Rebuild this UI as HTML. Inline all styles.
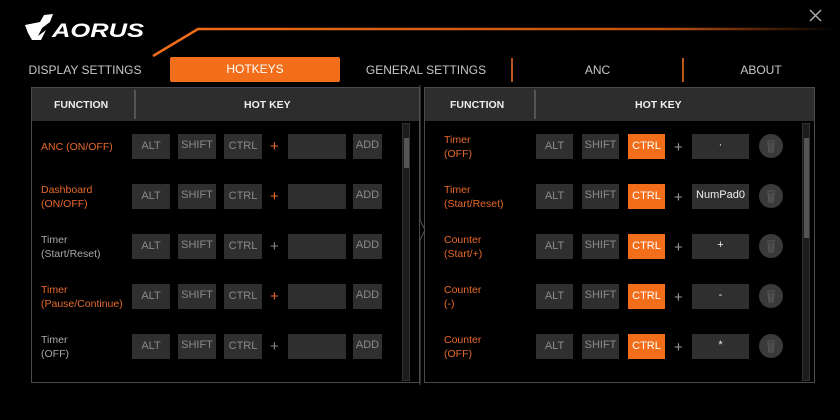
<!DOCTYPE html>
<html><head><meta charset="utf-8"><style>
*{margin:0;padding:0;box-sizing:border-box}
body{width:840px;height:420px;background:#000;overflow:hidden;position:relative;font-family:"Liberation Sans",sans-serif;color:#bbb}
.a{position:absolute}
.tab{position:absolute;top:63px;font-size:12px;color:#c8c8c8;text-align:center}
.panel{position:absolute;top:87px;height:296px;border:1px solid #4a4a4a}
.hdr{position:absolute;left:0;top:0;right:0;height:33px;background:#2d2d2d;font-size:10.5px;color:#eee;font-weight:bold}
.hdr span{position:absolute;top:11px}
.btn{position:absolute;height:25px;background:#2f2f2f;color:#8a8a8a;font-size:11px;text-align:center;line-height:25px}
.on{background:#f36e1a;color:#fff}
.lbl{position:absolute;font-size:10.5px;line-height:14px}
.or{color:#e8692a}.gr{color:#aaa}
.plus{position:absolute;font-size:15px}
.sb{position:absolute;width:8px;background:#1c1c1c;border:1px solid #333}
.sb i{position:absolute;left:1px;width:5px;background:#555}
.tr{position:absolute;width:24px;height:24px;border-radius:50%;background:#3a3a3a}
</style></head><body>
<svg class="a" style="left:0;top:0" width="840" height="90">
<defs><linearGradient id="g" x1="0" x2="1"><stop offset="0" stop-color="#f36e1a"/><stop offset="0.75" stop-color="#c0520f"/><stop offset="1" stop-color="#000"/></linearGradient></defs>
<path d="M153 56 L198 29 L835 29" fill="none" stroke="url(#g)" stroke-width="2.5"/>
<path d="M810 10 L821 21 M821 10 L810 21" stroke="#aaa" stroke-width="1.5"/>
<path d="M25 25 L40 22 L44 15 L53 14 L50 22 L42 28 L38 36 L46 30 L41 40 L32 40 L28 33 Z" fill="#fff"/>
<text x="52" y="37" font-family="Liberation Sans" font-weight="bold" font-style="italic" font-size="19" fill="#fff" textLength="92" lengthAdjust="spacingAndGlyphs">AORUS</text>
</svg>
<div class="tab" style="left:20px;width:130px">DISPLAY SETTINGS</div>
<div class="a" style="left:170px;top:57px;width:170px;height:25px;background:#f36e1a;border-radius:2px;color:#fff;font-size:12px;text-align:center;line-height:25px">HOTKEYS</div>
<div class="tab" style="left:356px;width:140px">GENERAL SETTINGS</div>
<div class="a" style="left:511px;top:58px;width:2px;height:24px;background:#b8561a"></div>
<div class="tab" style="left:560px;width:75px">ANC</div>
<div class="a" style="left:682px;top:58px;width:2px;height:24px;background:#b8561a"></div>
<div class="tab" style="left:725px;width:72px">ABOUT</div>

<div class="panel" style="left:31px;width:389px">
<div class="hdr"><span style="left:22px">FUNCTION</span><span style="left:212px">HOT KEY</span><div class="a" style="left:102px;top:2px;width:2px;height:29px;background:#555"></div></div>
<div class="sb" style="left:370px;top:35px;height:258px"><i style="top:14px;height:30px"></i></div>
</div>
<svg class="a" style="left:419px;top:85px" width="8" height="300"><path d="M1 0 L1 135 L6 145 L1 155 L1 300" fill="none" stroke="#555"/></svg>
<div class="panel" style="left:424px;width:391px">
<div class="hdr"><span style="left:25px">FUNCTION</span><span style="left:210px">HOT KEY</span><div class="a" style="left:109px;top:2px;width:2px;height:29px;background:#555"></div></div>
<div class="sb" style="left:377px;top:35px;height:258px"><i style="top:14px;height:100px"></i></div>
</div>

<div class="lbl or" style="left:41px;top:140px">ANC (ON/OFF)</div>
<div class="lbl or" style="left:41px;top:183px">Dashboard<br>(ON/OFF)</div>
<div class="lbl gr" style="left:41px;top:233px">Timer<br>(Start/Reset)</div>
<div class="lbl or" style="left:41px;top:283px">Timer<br>(Pause/Continue)</div>
<div class="lbl gr" style="left:41px;top:333px">Timer<br>(OFF)</div>

<div class="lbl or" style="left:444px;top:133px">Timer<br>(OFF)</div>
<div class="lbl or" style="left:444px;top:183px">Timer<br>(Start/Reset)</div>
<div class="lbl or" style="left:444px;top:233px">Counter<br>(Start/+)</div>
<div class="lbl or" style="left:444px;top:283px">Counter<br>(-)</div>
<div class="lbl or" style="left:444px;top:333px">Counter<br>(OFF)</div>

<div id="rows"></div>
<script>
var h='';var ys=[134,184,234,284,334];var lp=[1,1,0,1,0];var keys=['·','NumPad0','+','-','*'];
var trash='<svg width="24" height="24" style="position:absolute;left:0;top:0"><path d="M8 7 H16 M9 8 L10 18 H14 L15 8 M11 9 V17 M13 9 V17" stroke="#555" stroke-width="1.2" fill="none"/></svg>';
ys.forEach(function(y,i){
h+='<div class="btn" style="left:132px;top:'+y+'px;width:38px">ALT</div>';
h+='<div class="btn" style="left:178px;top:'+y+'px;width:38px;line-height:22px">SHIFT</div>';
h+='<div class="btn" style="left:224px;top:'+y+'px;width:38px">CTRL</div>';
h+='<div class="plus" style="left:270px;top:'+(y+4)+'px;color:'+(lp[i]?'#e8692a':'#888')+'">+</div>';
h+='<div class="btn" style="left:288px;top:'+y+'px;width:58px"></div>';
h+='<div class="btn" style="left:353px;top:'+y+'px;width:29px;line-height:22px">ADD</div>';
h+='<div class="btn" style="left:536px;top:'+y+'px;width:37px">ALT</div>';
h+='<div class="btn" style="left:582px;top:'+y+'px;width:37px;line-height:22px">SHIFT</div>';
h+='<div class="btn on" style="left:628px;top:'+y+'px;width:37px">CTRL</div>';
h+='<div class="plus" style="left:674px;top:'+(y+5)+'px;color:#999">+</div>';
h+='<div class="btn" style="left:692px;top:'+y+'px;width:57px;color:#eee;line-height:22px">'+keys[i]+'</div>';
h+='<div class="tr" style="left:759px;top:'+y+'px">'+trash+'</div>';
});
document.getElementById('rows').innerHTML=h;
</script>
</body></html>
